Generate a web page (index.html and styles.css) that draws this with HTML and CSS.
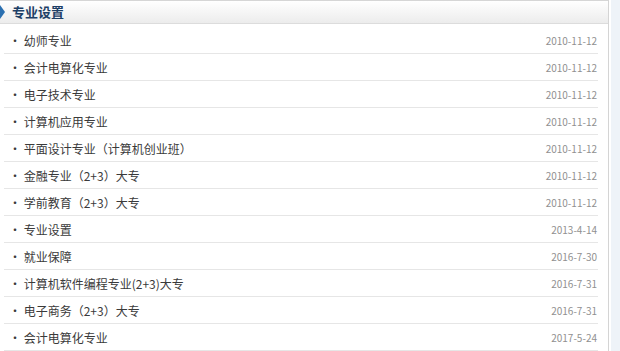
FILE: index.html
```html
<!DOCTYPE html>
<html lang="zh-CN">
<head>
    <meta charset="UTF-8">
    <title>专业设置</title>
    <link rel="stylesheet" href="styles.css">
</head>
<body>
    <div class="page">
        <div class="panel">
            <div class="panel-head">
                <span class="marker"></span>
                <h2>专业设置</h2>
            </div>
            <ul class="news">
                <li><span class="title">· 幼师专业</span><span class="date">2010-11-12</span></li>
                <li><span class="title">· 会计电算化专业</span><span class="date">2010-11-12</span></li>
                <li><span class="title">· 电子技术专业</span><span class="date">2010-11-12</span></li>
                <li><span class="title">· 计算机应用专业</span><span class="date">2010-11-12</span></li>
                <li><span class="title">· 平面设计专业（计算机创业班）</span><span class="date">2010-11-12</span></li>
                <li><span class="title">· 金融专业（2+3）大专</span><span class="date">2010-11-12</span></li>
                <li><span class="title">· 学前教育（2+3）大专</span><span class="date">2010-11-12</span></li>
                <li><span class="title">· 专业设置</span><span class="date">2013-4-14</span></li>
                <li><span class="title">· 就业保障</span><span class="date">2016-7-30</span></li>
                <li><span class="title">· 计算机软件编程专业(2+3)大专</span><span class="date">2016-7-31</span></li>
                <li><span class="title">· 电子商务（2+3）大专</span><span class="date">2016-7-31</span></li>
                <li><span class="title">· 会计电算化专业</span><span class="date">2017-5-24</span></li>
            </ul>
        </div>
        <div class="side"></div>
    </div>
</body>
</html>
```

FILE: styles.css
```css
body {
    margin: 0;
    background: #ffffff;
    font-family: "Noto Sans CJK SC", "Liberation Sans", sans-serif;
    font-size: 12px;
    color: #333333;
}

.page {
    display: flex;
    height: 351px;
    overflow: hidden;
}

.panel {
    width: 608px;
    border-right: 1px solid #d4d4d4;
}

.side {
    flex: 1;
    margin-left: 2px;
    background: #eef3f8;
}

.panel-head {
    display: flex;
    align-items: center;
    height: 22px;
    border-top: 1px solid #d6d6d6;
    border-bottom: 1px solid #dcdcdc;
    background: linear-gradient(#ffffff, #ececec);
}

.marker {
    width: 0;
    height: 0;
    border-top: 7px solid transparent;
    border-bottom: 7px solid transparent;
    border-left: 5px solid #2a6fb0;
}

.panel-head h2 {
    margin: 0 0 0 7px;
    font-size: 13px;
    font-weight: bold;
    color: #1d3f66;
    line-height: 22px;
}

.news {
    list-style: none;
    margin: 3px 0 0;
    padding: 0 10px 0 4px;
}

.news li {
    display: flex;
    justify-content: space-between;
    align-items: center;
    height: 26px;
    border-bottom: 1px solid #e6e6e6;
}

.title {
    padding-left: 5px;
    color: #3a3a3a;
}

.date {
    color: #909090;
    font-size: 10px;
    padding-right: 1px;
}
```
